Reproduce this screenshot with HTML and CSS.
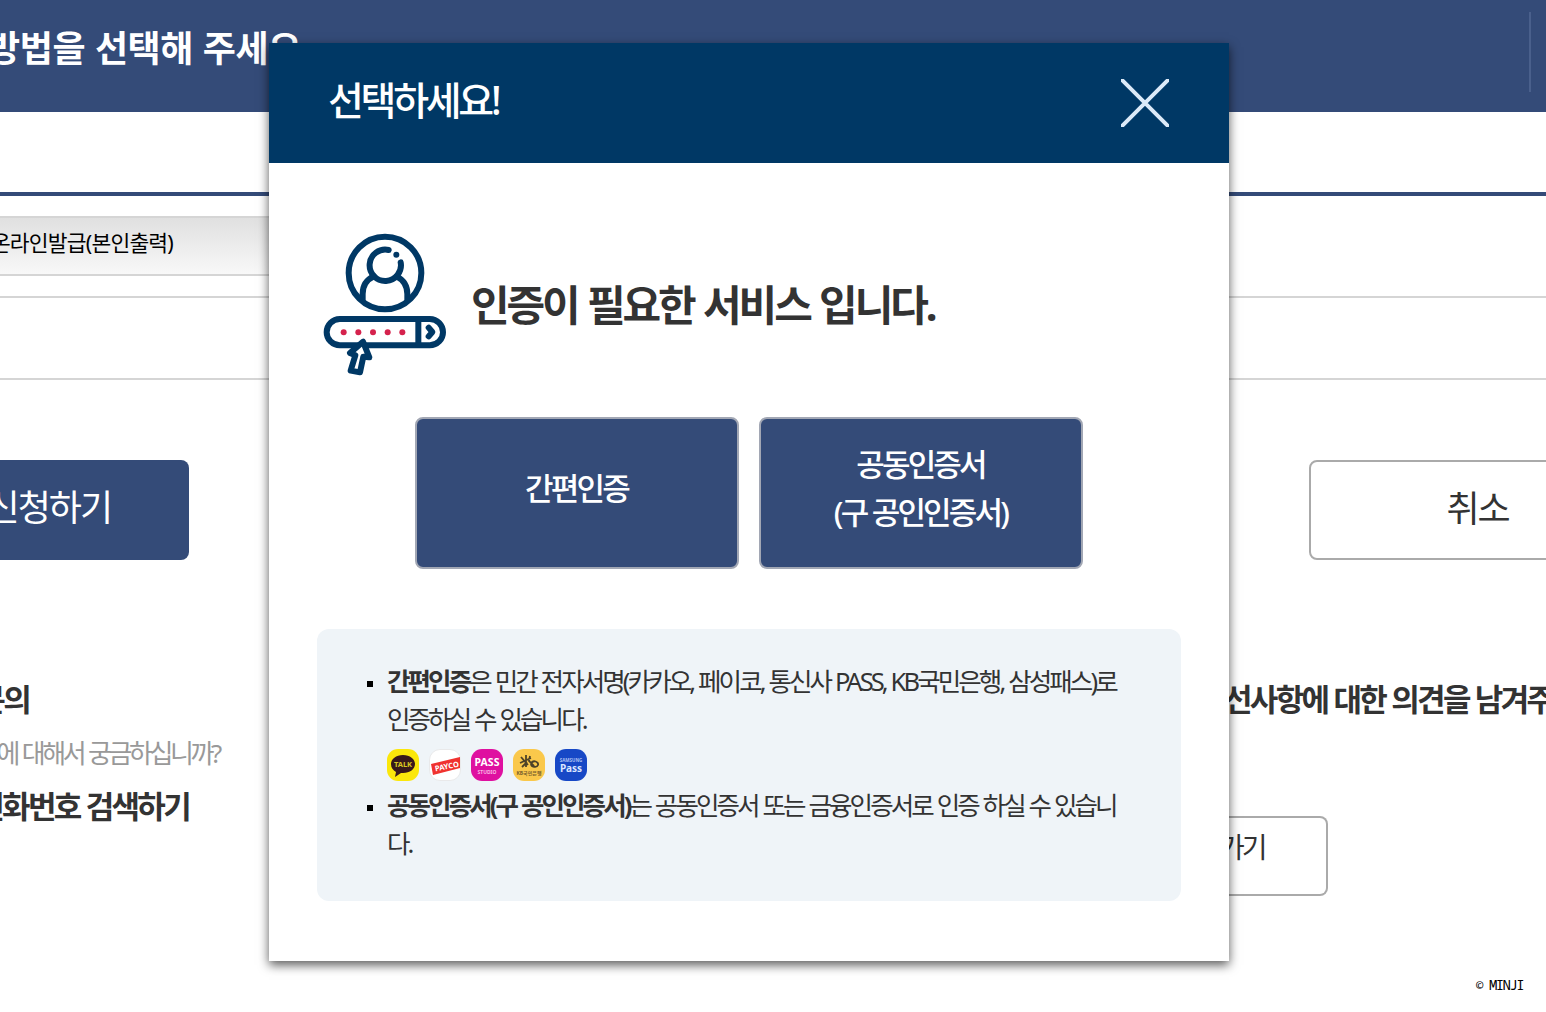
FILE: index.html
```html
<!DOCTYPE html>
<html lang="ko">
<head>
    <meta charset="UTF-8">
    <meta name="viewport" content="width=device-width, initial-scale=1.0">
    <title>선택하세요!</title>
    <link rel="stylesheet" href="styles.css">
</head>
<body>
    <div class="page">
        <header class="top-bar">
            <h1 class="top-title">방법을 선택해 주세요</h1>
            <span class="top-line"></span>
        </header>

        <div class="form-table">
            <div class="form-row">
                <div class="select-box"><span>온라인발급(본인출력)</span></div>
            </div>
            <div class="form-row empty"></div>
        </div>

        <div class="btn-row">
            <a class="btn-apply"><span>신청하기</span></a>
            <a class="btn-cancel">취소</a>
        </div>

        <div class="guide">
            <div class="guide-left">
                <h2>문의</h2>
                <p>에 대해서 궁금하십니까?</p>
                <h2>전화번호 검색하기</h2>
            </div>
            <div class="guide-right">
                <h2>선사항에 대한 의견을 남겨주</h2>
                <a class="btn-go">가기</a>
            </div>
        </div>

        <footer class="copy">© MINJI</footer>
    </div>

    <div class="popup">
        <div class="popup-head">
            <h2>선택하세요!</h2>
            <svg class="close" viewBox="0 0 48 48">
                <path d="M0 0L48 48M48 0L0 48" stroke="#dceaf8" stroke-width="4"/>
            </svg>
        </div>
        <div class="popup-body">
            <div class="intro">
                <svg class="intro-icon" viewBox="0 0 510 510" fill="none" stroke="#003865" stroke-width="18" stroke-linecap="round" stroke-linejoin="round">
                    <circle cx="255" cy="159" r="109"/>
                    <path d="M266 90A47 47 0 1 0 302 127"/>
                    <circle cx="289" cy="104" r="9" fill="#003865" stroke="none"/>
                    <path d="M188 238V222C188 196 202 178 222 169M290 169C309 179 322 196 322 222V238"/>
                    <rect x="80" y="297" width="349" height="79" rx="39.5"/>
                    <path d="M355 300V374"/>
                    <path d="M386 323L397 336L386 349" stroke-width="18"/>
                    <path d="M189 365L150 399L166 406L152 452L180 457L190 410L208 412Z" fill="#fff"/>
                    <g fill="#d5224d" stroke="none">
                        <circle cx="131" cy="337" r="9"/>
                        <circle cx="175" cy="337" r="9"/>
                        <circle cx="219" cy="337" r="9"/>
                        <circle cx="263" cy="337" r="9"/>
                        <circle cx="307" cy="337" r="9"/>
                    </g>
                </svg>
                <strong>인증이 필요한 서비스 입니다.</strong>
            </div>

            <div class="choice">
                <a>간편인증</a>
                <a>공동인증서<br>(구 공인인증서)</a>
            </div>

            <ul class="notice">
                <li>
                    <b>간편인증</b>은 민간 전자서명(카카오, 페이코, 통신사 PASS, KB국민은행, 삼성패스)로<br>인증하실 수 있습니다.
                    <div class="apps">
                        <svg viewBox="0 0 32 32">
                            <rect width="32" height="32" rx="11" fill="#fbe70b"/>
                            <path d="M16 6C9 6 4 10 4 15c0 4 2 6 5 8l-1 5 6-4h2c7 0 12-4 12-9s-5-9-12-9z" fill="#38181b"/>
                            <text x="16" y="18" font-size="7.5" font-weight="700" text-anchor="middle" fill="#d9c521">TALK</text>
                        </svg>
                        <svg viewBox="0 0 32 32">
                            <rect x=".5" y=".5" width="31" height="31" rx="10.5" fill="#fff" stroke="#e9e9ea"/>
                            <path d="M2 15L31 8V19L4 26Z" fill="#f0322f"/>
                            <text x="18" y="20" font-size="7.5" font-weight="700" text-anchor="middle" fill="#fff" transform="rotate(-11 18 18)">PAYCO</text>
                        </svg>
                        <svg viewBox="0 0 32 32">
                            <rect width="32" height="32" rx="11" fill="#df10a0"/>
                            <text x="16" y="17" font-size="10.5" font-weight="700" text-anchor="middle" fill="#fff">PASS</text>
                            <text x="16" y="25" font-size="5" font-weight="700" text-anchor="middle" fill="#f9b5e2">STUDIO</text>
                        </svg>
                        <svg viewBox="0 0 32 32">
                            <rect width="32" height="32" rx="11" fill="#fac84b"/>
                            <path d="M8 8L15 16M13 6V18M7 14L18 9M9 18L14 13M17 7L16 12L21 17M18 15C20 10 26 13 25 16S18 18 18 15" fill="none" stroke="#4d4228" stroke-width="1.8"/>
                            <text x="16" y="26" font-size="5" font-weight="700" text-anchor="middle" fill="#77602b">KB국민은행</text>
                        </svg>
                        <svg viewBox="0 0 32 32">
                            <rect width="32" height="32" rx="11" fill="#1748c6"/>
                            <text x="16" y="13" font-size="4.5" font-weight="700" text-anchor="middle" fill="#a9bff2">SAMSUNG</text>
                            <text x="16" y="22.5" font-size="10" font-weight="700" text-anchor="middle" fill="#dce7ff">Pass</text>
                        </svg>
                    </div>
                </li>
                <li><b>공동인증서(구 공인인증서)</b>는 공동인증서 또는 금융인증서로 인증 하실 수 있습니<br>다.</li>
            </ul>
        </div>
    </div>
</body>
</html>
```
FILE: styles.css
```css
* {
    box-sizing: border-box;
    margin: 0;
    padding: 0;
}

body {
    width: 1546px;
    height: 1012px;
    overflow: hidden;
    position: relative;
    background: #fff;
    color: #333;
    font-family: "Noto Sans", "Noto Sans CJK KR", sans-serif;
    white-space: nowrap;
}

.page {
    width: 1546px;
    height: 1012px;
    display: flex;
    flex-direction: column;
    overflow: hidden;
}

.top-bar {
    height: 112px;
    background: #344b78;
    display: flex;
    justify-content: space-between;
    padding: 12px 15px 20px 0;
}

.top-title {
    width: 301px;
    display: flex;
    justify-content: flex-end;
    color: #fff;
    font-size: 36px;
    line-height: 73px;
    letter-spacing: -0.4px;
    word-spacing: 0.8px;
}

.top-line {
    width: 2px;
    background: #4a608c;
}

.form-table {
    margin-top: 80px;
    border-top: 4px solid #344b78;
}

.form-row {
    height: 102px;
    padding-top: 20px;
    border-bottom: 2px solid #d5d5d5;
}

.form-row.empty {
    height: 82px;
}

.select-box {
    width: 500px;
    height: 60px;
    border: 2px solid #d5d5d5;
    border-left: 0;
    background: linear-gradient(#e0e0e0, #f8f8f8);
    color: #000;
    font-size: 21.5px;
    line-height: 50px;
    letter-spacing: -0.8px;
}

.select-box span {
    width: 173px;
    display: flex;
    justify-content: flex-end;
}

.btn-row {
    margin-top: 80px;
    display: flex;
    justify-content: space-between;
    font-size: 36px;
    letter-spacing: -2px;
}

.btn-apply {
    width: 189px;
    height: 100px;
    padding-right: 78px;
    display: flex;
    justify-content: flex-end;
    border-radius: 0 8px 8px 0;
    background: #344b78;
    color: #fff;
    line-height: 96px;
}

.btn-cancel {
    width: 337px;
    height: 100px;
    margin-right: -100px;
    border: 2px solid #aaa;
    border-radius: 8px;
    text-align: center;
    line-height: 93px;
}

.guide {
    margin-top: 112px;
    display: flex;
    justify-content: space-between;
}

.guide h2 {
    font-size: 31px;
    line-height: 55px;
    letter-spacing: -2.7px;
    word-spacing: 0.8px;
}

.guide-left h2 {
    width: 189px;
    display: flex;
    justify-content: flex-end;
}

.guide-left h2:first-child {
    width: 29px;
}

.guide-left p {
    width: 219px;
    display: flex;
    justify-content: flex-end;
    color: #999;
    font-size: 26px;
    line-height: 52px;
    letter-spacing: -3.4px;
    word-spacing: 1.4px;
}

.guide-right {
    width: 322px;
}

.btn-go {
    display: block;
    width: 109px;
    height: 80px;
    margin: 89px 0 0 -5px;
    border: 2px solid #aaa;
    border-left: 0;
    border-radius: 0 8px 8px 0;
    font-size: 28px;
    line-height: 59px;
    letter-spacing: -3px;
}

.copy {
    margin: auto 23px 17px auto;
    color: #000;
    font: 14px/20px "Noto Sans Mono", "DejaVu Sans Mono", monospace;
    letter-spacing: -1.6px;
}

/* popup */
.popup {
    position: absolute;
    left: 269px;
    top: 43px;
    width: 960px;
    height: 918px;
    background: #fff;
    box-shadow: 0 4px 10px rgba(0, 0, 0, 0.65);
}

.popup-head {
    height: 120px;
    padding: 0 60px 6px 59px;
    display: flex;
    align-items: center;
    justify-content: space-between;
    background: #003865;
    color: #fff;
}

.popup-head h2 {
    font-size: 39px;
    font-weight: 500;
    line-height: 114px;
    letter-spacing: -3.3px;
}

.close {
    width: 48px;
    height: 48px;
    margin-top: 6px;
}

.popup-body {
    padding: 57px 48px 0;
}

.intro {
    height: 170px;
    margin-left: -17px;
    display: flex;
}

.intro-icon {
    width: 170px;
    height: 170px;
}

.intro strong {
    margin-left: 1px;
    font-size: 42px;
    line-height: 170px;
    letter-spacing: -3.1px;
    word-spacing: 1.6px;
}

.choice {
    margin-top: 27px;
    display: flex;
    justify-content: center;
    gap: 20px;
}

.choice a {
    width: 324px;
    height: 152px;
    padding: 0 1px 10px 0;
    display: flex;
    align-items: center;
    justify-content: center;
    border: 2px solid #a2a7b4;
    border-radius: 8px;
    background: #344b78;
    color: #fff;
    font-size: 31px;
    font-weight: 500;
    line-height: 48px;
    letter-spacing: -2.8px;
    text-align: center;
}

.notice {
    height: 272px;
    margin-top: 60px;
    padding: 33px 60px 0 70px;
    border-radius: 12px;
    background: #eff4f8;
    list-style: none;
    font-size: 25.5px;
    line-height: 38px;
    letter-spacing: -2.9px;
    word-spacing: 1.1px;
}

.notice li::before {
    content: "";
    float: left;
    width: 6px;
    height: 6px;
    margin: 19px 0 0 -20px;
    background: #000;
}

.apps {
    height: 48px;
    padding-top: 11px;
    display: flex;
    gap: 10px;
    letter-spacing: 0;
}

.apps svg {
    width: 32px;
    height: 32px;
}
```
